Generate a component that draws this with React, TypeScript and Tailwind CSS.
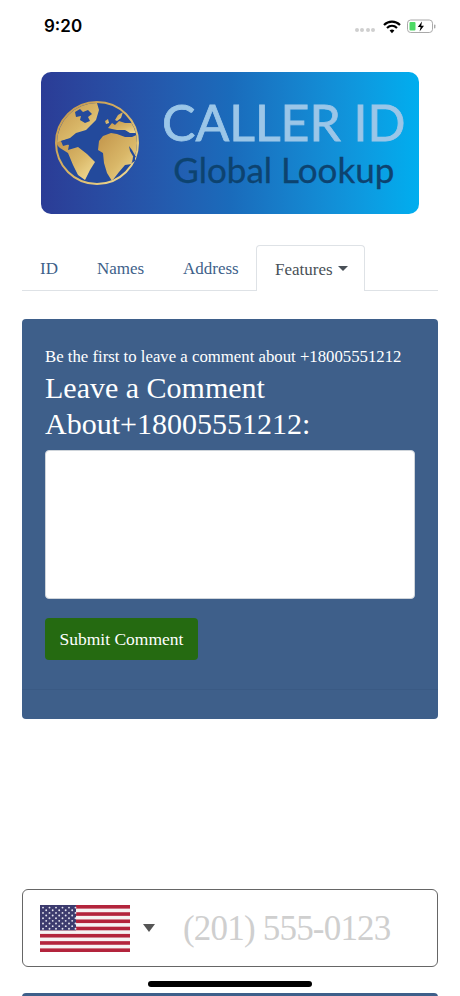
const serif = "font-['Liberation_Serif',serif]"

function Globe() {
  return (
    <svg viewBox="0 0 84 84" className="w-[84px] h-[84px] shrink-0">
      <defs>
        <linearGradient id="gold" x1="0" y1="0" x2="1" y2="1">
          <stop offset="0" stopColor="#c2944a" />
          <stop offset="0.55" stopColor="#d9b768" />
          <stop offset="1" stopColor="#f4e09a" />
        </linearGradient>
        <clipPath id="disc">
          <circle cx="42" cy="42" r="40" />
        </clipPath>
      </defs>
      <circle cx="42" cy="42" r="41" fill="#234a9c" stroke="url(#gold)" strokeWidth="2" />
      <g clipPath="url(#disc)" fill="url(#gold)">
        {/* north america */}
        <path d="M19 7 L32 2 L42 2 L44 9 L41 19 L36 24 L31 29 L21 32 L15 37 L6 40 L0 44 L0 30 L3 24 L10 14 Z" />
        {/* central + south america */}
        <path d="M0 42 L6 40 L14 44 L13 49 L23 46 L32 53 L40 61 L35 69 L30 79 L23 74 L18 64 L13 52 L5 47 Z" />
        {/* africa + asia */}
        <path d="M44 40 L48 35 L56 32 L62 33 L70 36 L77 36 L84 33 L84 62 L70 64 L64 71 L57 80 L52 72 L49 62 L48 52 L43 49 Z" />
        {/* europe */}
        <path d="M53 27 L57 22 L60 24 L64 20 L70 22 L78 22 L84 27 L84 32 L75 32 L70 29 L62 29 L57 28 Z" />
        <path d="M60 19 L63 14 L68 11 L66 17 L62 20 Z" />
        <path d="M50 20 L53 18 L54 22 L51 23 Z" />
      </g>
      <g fill="#234a9c">
        <path d="M20 11 L25 8 L28 11 L33 9 L37 13 L33 16 L35 20 L30 22 L25 19 L26 15 L21 16 Z" />
        <path d="M6 40 L14 38 L15 43 L8 45 Z" />
        <path d="M74 45 L77 49 L81 56 L79 57 L75 50 Z" />
        <path d="M78 56 L80 55 L80 60 L77 62 Z" />
      </g>
    </svg>
  )
}

function Flag() {
  const stripes = [0, 1, 2, 3, 4, 5, 6, 7, 8, 9, 10, 11, 12]
  const stars: [number, number][] = []
  for (let r = 0; r < 9; r++) {
    const count = r % 2 === 0 ? 6 : 5
    for (let c = 0; c < count; c++) {
      stars.push([r % 2 === 0 ? 3 + c * 6.5 : 6.2 + c * 6.5, 2.6 + r * 2.65])
    }
  }
  return (
    <svg viewBox="0 0 90 47" className="w-[90px] h-[47px] shrink-0" preserveAspectRatio="none">
      <rect width="90" height="47" fill="#f6f2f3" />
      {stripes.filter((s) => s % 2 === 0).map((s) => (
        <rect key={s} y={(s * 47) / 13} width="90" height={47 / 13} fill="#b3243c" />
      ))}
      <rect width="36" height="25.3" fill="#3c3b6e" />
      {stars.map(([x, y], i) => (
        <circle key={i} cx={x} cy={y} r="0.95" fill="#e6e6f0" />
      ))}
    </svg>
  )
}

function StatusBar() {
  return (
    <div className="h-[50px] shrink-0 flex items-center justify-between pl-[44px] pr-[23px] pt-[3px]">
      <span className="font-['Inter',sans-serif] text-[17px] font-semibold text-black">9:20</span>
      <div className="flex items-center">
        <div className="flex gap-[1.5px] mr-[8px] mt-[7px]">
          <span className="w-[4px] h-[4px] rounded-full bg-[#cfcfcf]" />
          <span className="w-[4px] h-[4px] rounded-full bg-[#cfcfcf]" />
          <span className="w-[4px] h-[4px] rounded-full bg-[#cfcfcf]" />
          <span className="w-[4px] h-[4px] rounded-full bg-[#cfcfcf]" />
        </div>
        <svg viewBox="0 0 18 14" className="w-[18px] h-[14px] mr-[6px]">
          <path d="M1 5 C5.5 0.5 12.5 0.5 17 5" fill="none" stroke="#000" strokeWidth="2.2" />
          <path d="M4 8 C7 5.2 11 5.2 14 8" fill="none" stroke="#000" strokeWidth="2.2" />
          <path d="M6.6 10.4 L9 13.2 L11.4 10.4 C10 9.3 8 9.3 6.6 10.4 Z" fill="#000" />
        </svg>
        <svg viewBox="0 0 30 15" className="w-[30px] h-[15px]">
          <rect x="0.5" y="1" width="25" height="12.5" rx="3.2" fill="#fff" stroke="#a9a9a9" />
          <rect x="2.5" y="3" width="6" height="8.5" rx="1" fill="#4cd964" />
          <path d="M15 2.5 L10.8 8 L13.6 8 L12.6 12.5 L17 6.8 L14.2 6.8 Z" fill="#000" />
          <rect x="27" y="5.5" width="1.4" height="4" rx="0.7" fill="#a9a9a9" />
        </svg>
      </div>
    </div>
  )
}

function Tabs() {
  return (
    <div className={`mx-[22px] mt-[31px] h-[46px] shrink-0 flex items-stretch border-b border-[#dee2e6] text-[17px] ${serif}`}>
      <span className="w-[56px] pl-[18px] pt-[2px] flex items-center text-[#3e5f8a]">ID</span>
      <span className="w-[86px] pl-[19px] pt-[2px] flex items-center text-[#3e5f8a]">Names</span>
      <span className="w-[92px] pl-[19px] pt-[2px] flex items-center text-[#3e5f8a]">Address</span>
      <span className="w-[109px] h-[46px] pl-[18px] pt-[2px] flex items-center gap-[5px] bg-white border border-b-0 border-[#dee2e6] rounded-t-[4px] text-[#495057]">
        Features
        <span className="w-0 h-0 border-x-[5px] border-x-transparent border-t-[5px] border-t-[#495057] mb-[2px]" />
      </span>
    </div>
  )
}

export default function App() {
  return (
    <div className="relative w-[460px] h-[996px] overflow-hidden bg-white flex flex-col">
      <StatusBar />
      <div className="mx-[41px] mt-[22px] h-[142px] shrink-0 rounded-[10px] bg-gradient-to-r from-[#2b3c96] via-[#1a6bbb] to-[#00aeef] flex items-center pl-[14px] pr-[14px]">
        <Globe />
        <div className="ml-[23px] flex-1 flex flex-col items-center pb-[3px]">
          <span className="font-['Lato',sans-serif] text-[50px] leading-[54px] [-webkit-text-stroke:0.8px_#9bc6e8] text-[#9bc6e8] whitespace-nowrap">CALLER ID</span>
          <span className="font-['Lato',sans-serif] text-[35px] leading-[40px] [-webkit-text-stroke:0.3px_#0d4370] text-[#0d4370] whitespace-nowrap">Global Lookup</span>
        </div>
      </div>
      <Tabs />
      <div className={`mx-[22px] mt-[28px] h-[400px] shrink-0 rounded-[4px] bg-[#3e5f8a] flex flex-col text-white ${serif}`}>
        <div className="flex-1 px-[23px] pt-[26px] border-b border-[#3a5a84]">
          <p className="text-[16.75px] leading-[24px] whitespace-nowrap">Be the first to leave a comment about +18005551212</p>
          <h2 className="text-[30px] leading-[36px] mt-[1px]">
            Leave a Comment
            <br />
            About+18005551212:
          </h2>
          <div className="mt-[8px] h-[149px] rounded-[4px] bg-white border border-[#ced4da]" />
          <button className="mt-[19px] h-[42px] w-[153px] rounded-[4px] bg-[#256a11] text-[17.5px] text-white">Submit Comment</button>
        </div>
        <div className="h-[29px]" />
      </div>
      <div className={`mx-[22px] mt-[170px] h-[78px] shrink-0 rounded-[6px] border border-[#666] flex items-center pl-[17px] ${serif}`}>
        <Flag />
        <span className="ml-[13px] w-0 h-0 border-x-[6px] border-x-transparent border-t-[8px] border-t-[#555]" />
        <span className="ml-[28px] pt-[3px] text-[35px] tracking-[-0.8px] text-[#cfcfcf] whitespace-nowrap">(201) 555-0123</span>
      </div>
      <div className="mx-[22px] mt-[26px] h-[20px] shrink-0 rounded-t-[4px] bg-[#3e5f8a]" />
      <div className="absolute left-[148px] top-[981px] w-[164px] h-[6px] rounded-full bg-black" />
    </div>
  )
}
